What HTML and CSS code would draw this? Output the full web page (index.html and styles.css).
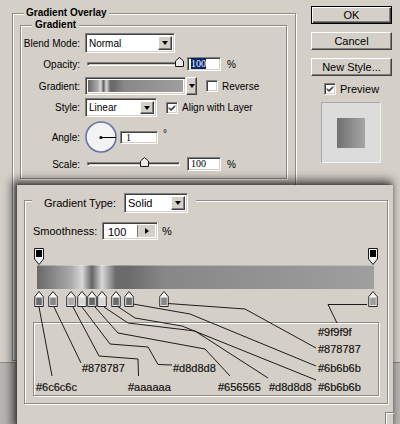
FILE: index.html
```html
<!DOCTYPE html>
<html lang="en">
<head>
  <meta charset="UTF-8">
  <title>Gradient Overlay</title>
  <link rel="stylesheet" href="styles.css">
</head>
<body>
  <svg class="defs" width="0" height="0">
    <symbol id="color-stop" viewBox="0 0 10 17">
      <path d="M0.5 16.5 V6 L5 0.5 L9.5 6 V16.5 Z" fill="#f2f2f2" stroke="#1a1a1a"/>
      <rect x="2" y="7" width="6" height="8" fill="currentColor"/>
    </symbol>
    <symbol id="opacity-stop" viewBox="0 0 10 17">
      <path d="M0.5 0.5 H9.5 V11 L5 16.5 L0.5 11 Z" fill="#f2f2f2" stroke="#1a1a1a"/>
      <rect x="2" y="2" width="6" height="7" fill="#000"/>
    </symbol>
    <symbol id="thumb" viewBox="0 0 9 10">
      <path d="M0.5 9.5 V4 L4.5 0.5 L8.5 4 V9.5 Z" fill="#ecebe8" stroke="#1a1a1a"/>
    </symbol>
    <symbol id="tick" viewBox="0 0 8 8">
      <path d="M1 3.5 L3 5.5 L7 1.5 M1 4.5 L3 6.5 L7 2.5" fill="none" stroke="#000" stroke-width="1"/>
    </symbol>
  </svg>

  <div class="layer-style">
    <fieldset class="group outer">
      <legend>Gradient Overlay</legend>
      <fieldset class="group inner">
        <legend>Gradient</legend>
        <div class="rows">
          <label>Blend Mode:</label>
          <div class="ctl">
            <div class="field select blend"><span>Normal</span><span class="drop"></span></div>
          </div>

          <label>Opacity:</label>
          <div class="ctl">
            <div class="slider"><svg class="thumb" style="left:87px"><use href="#thumb"/></svg></div>
            <div class="field num"><span class="picked">100</span></div>
            <span class="unit">%</span>
          </div>

          <label>Gradient:</label>
          <div class="ctl">
            <div class="field swatch"><div class="swatch-fill"></div></div>
            <span class="drop solo"></span>
            <span class="field check"></span>
            <span class="check-text">Reverse</span>
          </div>

          <label>Style:</label>
          <div class="ctl">
            <div class="field select style"><span>Linear</span><span class="drop"></span></div>
            <span class="field check"><svg><use href="#tick"/></svg></span>
            <span class="check-text">Align with Layer</span>
          </div>

          <label>Angle:</label>
          <div class="ctl">
            <svg class="dial" viewBox="0 0 32 32">
              <circle cx="16" cy="16" r="15" fill="#f3f3f3" stroke="#6474a4" stroke-width="1.6"/>
              <line x1="16" y1="16.5" x2="31" y2="16.5" stroke="#000"/>
              <circle cx="16" cy="16.5" r="1.6" fill="#000"/>
            </svg>
            <div class="field num angle">1</div>
            <span class="deg">°</span>
          </div>

          <label>Scale:</label>
          <div class="ctl">
            <div class="slider"><svg class="thumb" style="left:52px"><use href="#thumb"/></svg></div>
            <div class="field num">100</div>
            <span class="unit">%</span>
          </div>
        </div>
      </fieldset>
    </fieldset>

    <div class="side">
      <div class="button default">OK</div>
      <div class="button">Cancel</div>
      <div class="button">New Style...</div>
      <div class="preview-row">
        <span class="field check"><svg><use href="#tick"/></svg></span>
        <span>Preview</span>
      </div>
      <div class="preview"><div class="preview-swatch"></div></div>
    </div>
  </div>

  <div class="editor">
    <fieldset class="group frame">
      <legend>
        <span class="type-label">Gradient Type:</span>
        <div class="field select solid"><span>Solid</span><span class="drop"></span></div>
      </legend>
      <div class="frame-body">
        <div class="smooth-row">
          <span class="smooth-label">Smoothness:</span>
          <div class="field smooth"><span>100</span><span class="step"></span></div>
          <span class="unit">%</span>
        </div>

        <div class="track opacity-stops">
          <svg class="stop" style="left:-3px"><use href="#opacity-stop"/></svg>
          <svg class="stop" style="left:331px"><use href="#opacity-stop"/></svg>
        </div>
        <div class="track bar"></div>
        <div class="track color-stops">
          <svg class="stop" style="left:-3px;color:#6c6c6c"><use href="#color-stop"/></svg>
          <svg class="stop" style="left:11px;color:#878787"><use href="#color-stop"/></svg>
          <svg class="stop" style="left:29px;color:#aaaaaa"><use href="#color-stop"/></svg>
          <svg class="stop" style="left:40px;color:#d8d8d8"><use href="#color-stop"/></svg>
          <svg class="stop" style="left:50px;color:#656565"><use href="#color-stop"/></svg>
          <svg class="stop" style="left:60px;color:#d8d8d8"><use href="#color-stop"/></svg>
          <svg class="stop" style="left:74px;color:#6b6b6b"><use href="#color-stop"/></svg>
          <svg class="stop" style="left:87px;color:#6b6b6b"><use href="#color-stop"/></svg>
          <svg class="stop" style="left:122px;color:#878787"><use href="#color-stop"/></svg>
          <svg class="stop" style="left:331px;color:#9f9f9f"><use href="#color-stop"/></svg>
        </div>

        <div class="group notes">
          <span class="hex" style="left:2px;top:58px">#6c6c6c</span>
          <span class="hex" style="left:48px;top:39px">#878787</span>
          <span class="hex" style="left:94px;top:58px">#aaaaaa</span>
          <span class="hex" style="left:139px;top:39px">#d8d8d8</span>
          <span class="hex" style="left:184px;top:58px">#656565</span>
          <span class="hex" style="left:235px;top:58px">#d8d8d8</span>
          <span class="hex" style="left:284px;top:58px">#6b6b6b</span>
          <span class="hex" style="left:284px;top:39px">#6b6b6b</span>
          <span class="hex" style="left:284px;top:20px">#878787</span>
          <span class="hex" style="left:284px;top:3px">#9f9f9f</span>
        </div>
      </div>
    </fieldset>
    <div class="corner"></div>

    <!-- leader lines from each stop down to its colour note -->
    <svg class="leaders" width="376" height="239" viewBox="17 185 376 239">
      <g fill="none" stroke="#1c1c1c" stroke-width="1">
        <polyline points="39,307 52,376"/>
        <polyline points="54,307 81,363"/>
        <polyline points="73,307 99,356 138,359 138.5,376"/>
        <polyline points="82,307 110,344 148,347 158,364.5 172,365"/>
        <polyline points="95,307 118,333 205,349 230,376"/>
        <polyline points="104,307 128,323 195,331 268,378"/>
        <polyline points="117,306 135,318 182,326 316,380"/>
        <polyline points="133,304 190,314 316,366"/>
        <polyline points="168,303.5 245,309 316,348"/>
        <polyline points="367,304.5 328,304.5 337,323"/>
      </g>
    </svg>
  </div>
</body>
</html>
```

FILE: styles.css
```css
body {
  margin: 0;
  width: 400px;
  height: 424px;
  overflow: hidden;
  position: relative;
  background: #b7b6b2;
  font-family: "Liberation Sans", Arial, sans-serif;
  font-size: 10px;
  color: #000;
  --grad: linear-gradient(90deg, #6c6c6c 0.6%, #878787 4.7%, #aaaaaa 10.1%, #d8d8d8 13.4%, #656565 16.3%, #d8d8d8 19.3%, #6b6b6b 23.4%, #6b6b6b 27.3%, #878787 37.7%, #9f9f9f 99.7%);
}

.defs {
  position: absolute;
}

/* etched group boxes */
.group {
  box-sizing: border-box;
  margin: 0;
  padding: 0;
  min-width: 0;
  border: 1px solid #8d8b86;
  box-shadow: inset 1px 1px 0 #fff, 1px 1px 0 #fff;
}

.group > legend {
  padding: 0 2px;
  font-weight: bold;
  line-height: 12px;
  background: #d4d0c8;
}

/* sunken white field */
.field {
  box-sizing: border-box;
  background: #fff;
  border: 1px solid;
  border-color: #808080 #fff #fff #808080;
  box-shadow: inset 1px 1px 0 #404040, inset -1px -1px 0 #d4d0c8;
}

.layer-style {
  display: flex;
  height: 362px;
  background: #d4d0c8;
  border-bottom: 1px solid #8a8883;
}

.outer {
  width: 284px;
  height: 354px;
  margin: 7px 0 0 12px;
}

.outer > legend {
  margin-left: 11px;
}

.inner {
  width: 267px;
  height: 160px;
  margin-left: 7px;
}

.inner > legend {
  margin-left: 11px;
  padding: 0 3px;
}

.rows {
  display: grid;
  grid-template-columns: 59px auto;
  grid-template-rows: 20px 22px 22px 21px 38px 16px;
  column-gap: 5px;
  align-items: center;
  padding-top: 2px;
}

.rows > label {
  text-align: right;
}

.ctl {
  display: flex;
  align-items: center;
}

.select {
  display: flex;
  align-items: center;
  justify-content: space-between;
  padding: 2px 2px 2px 3px;
}

.blend {
  width: 90px;
  height: 20px;
}

.style {
  width: 72px;
  height: 19px;
}

.drop {
  display: flex;
  align-items: center;
  justify-content: center;
  box-sizing: border-box;
  width: 14px;
  height: 100%;
  background: #d4d0c8;
  border: 1px solid;
  border-color: #fff #404040 #404040 #fff;
  box-shadow: inset -1px -1px 0 #808080;
}

.drop::after {
  content: "";
  border-left: 3.5px solid transparent;
  border-right: 3.5px solid transparent;
  border-top: 4px solid #000;
}

.drop.solo {
  width: 11px;
  height: 18px;
}

.slider {
  position: relative;
  box-sizing: border-box;
  width: 93px;
  height: 4px;
  margin-left: 2px;
  border: 1px solid;
  border-color: #808080 #fff #fff #808080;
  box-shadow: inset 1px 1px 0 #404040;
}

.thumb {
  position: absolute;
  top: -6px;
  width: 9px;
  height: 10px;
}

.num {
  width: 34px;
  height: 14px;
  margin-left: 7px;
  padding-left: 3px;
  font-family: "Liberation Serif", "Times New Roman", serif;
  font-size: 10px;
  line-height: 12px;
}

.picked {
  background: #0a246a;
  color: #fff;
}

.unit {
  margin-left: 6px;
}

.swatch {
  width: 101px;
  height: 18px;
  padding: 2px;
}

.swatch-fill {
  height: 100%;
  background: var(--grad);
}

.check {
  display: flex;
  align-items: center;
  justify-content: center;
  width: 12px;
  height: 12px;
  margin-left: 9px;
}

.check svg {
  width: 8px;
  height: 8px;
}

.check-text {
  margin-left: 4px;
}

.dial {
  width: 32px;
  height: 32px;
}

.angle {
  width: 38px;
  height: 13px;
  margin-left: 3px;
  padding-left: 5px;
}

.deg {
  margin: -8px 0 0 5px;
}

/* right hand buttons */
.side {
  display: flex;
  flex-direction: column;
  width: 81px;
  margin: 6px 0 0 15px;
}

.button {
  box-sizing: border-box;
  height: 18px;
  margin-bottom: 8px;
  font-size: 11px;
  line-height: 16px;
  text-align: center;
  background: #d4d0c8;
  border: 1px solid;
  border-color: #fff #404040 #404040 #fff;
  box-shadow: inset -1px -1px 0 #808080;
}

.button.default {
  border-color: #000;
  box-shadow: inset 1px 1px 0 #fff, inset -1px -1px 0 #404040, inset -2px -2px 0 #808080;
}

.preview-row {
  display: flex;
  align-items: center;
  margin-top: -1px;
  font-size: 11px;
}

.preview-row .check {
  margin-left: 13px;
  margin-right: 4px;
}

.preview {
  box-sizing: border-box;
  width: 60px;
  height: 61px;
  margin: 7px 0 0 10px;
  padding: 15px 0 0 15px;
  background: #dcdcdc;
  border: 1px solid;
  border-color: #a9a8a4 #f2f2f2 #f2f2f2 #a9a8a4;
}

.preview-swatch {
  width: 28px;
  height: 30px;
  background: linear-gradient(90deg, #707070, #a6a6a6);
}

/* gradient editor window */
.editor {
  position: absolute;
  left: 17px;
  top: 185px;
  width: 376px;
  height: 245px;
  background: #d4d0c8;
  box-shadow: -3px -3px 9px 2px rgba(0, 0, 0, 0.6), -1px -1px 3px rgba(0, 0, 0, 0.35);
  font-size: 11px;
}

.frame {
  width: 364px;
  height: 211px;
  margin: 8px 0 0 7px;
}

.frame > legend {
  display: flex;
  align-items: flex-start;
  height: 14px;
  margin-left: 7px;
  padding: 0 8px 0 12px;
  font-weight: normal;
  line-height: 20px;
}

.type-label {
  width: 80px;
}

.solid {
  width: 64px;
  height: 20px;
  line-height: 14px;
}

.frame-body {
  padding-left: 8px;
}

.smooth-row {
  display: flex;
  align-items: center;
  height: 18px;
  margin-top: 15px;
}

.smooth-label {
  width: 69px;
}

.smooth {
  display: flex;
  align-items: stretch;
  justify-content: space-between;
  width: 56px;
  height: 18px;
  padding: 2px 2px 2px 5px;
  line-height: 14px;
}

.step {
  display: flex;
  align-items: center;
  justify-content: center;
  width: 17px;
  background: #d4d0c8;
  border-left: 1px solid #808080;
}

.step::after {
  content: "";
  border-top: 3.5px solid transparent;
  border-bottom: 3.5px solid transparent;
  border-left: 4px solid #000;
}

.smooth-row .unit {
  margin-left: 4px;
}

.track {
  position: relative;
  width: 337px;
  margin-left: 4px;
}

.opacity-stops {
  height: 17px;
  margin-top: 8px;
}

.bar {
  height: 24px;
  background: var(--grad);
  box-shadow: inset 0 1px 0 rgba(255, 255, 255, 0.35);
}

.color-stops {
  height: 16px;
  margin-top: 2px;
}

.stop {
  position: absolute;
  top: 0;
  width: 10px;
  height: 17px;
}

.color-stops .stop {
  height: 16px;
}

.notes {
  position: relative;
  width: 346px;
  height: 74px;
  margin-top: 15px;
}

.hex {
  position: absolute;
  line-height: 12px;
  color: #141414;
  -webkit-text-stroke: 0.2px #141414;
}

/* edge of the next button, cut off by the window */
.corner {
  width: 8px;
  height: 14px;
  margin: 8px 0 0 368px;
  border-top: 1px solid #808080;
  border-left: 1px solid #808080;
  box-shadow: inset 1px 1px 0 #fff;
}

.leaders {
  position: absolute;
  left: 0;
  top: 0;
  pointer-events: none;
}
```
